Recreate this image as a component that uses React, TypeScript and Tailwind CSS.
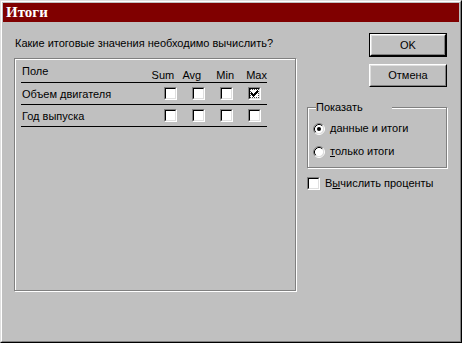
import React from "react";

const FONT = "font-['Liberation_Sans',Arial,sans-serif]";

function CheckMark() {
  const px: [number, number][] = [
    [6, 0],
    [5, 1], [6, 1],
    [0, 2], [4, 2], [5, 2], [6, 2],
    [0, 3], [1, 3], [3, 3], [4, 3], [5, 3],
    [0, 4], [1, 4], [2, 4], [3, 4], [4, 4],
    [1, 5], [2, 5], [3, 5],
    [2, 6],
  ];
  return (
    <svg width="7" height="7" viewBox="0 0 7 7" shapeRendering="crispEdges">
      {px.map(([x, y], i) => (
        <rect key={i} x={x} y={y} width="1" height="1" fill="#000" />
      ))}
    </svg>
  );
}

function Checkbox({ checked = false, focus = false }: { checked?: boolean; focus?: boolean }) {
  return (
    <div className="w-[13px] h-[13px] shrink-0 border border-t-[#808080] border-l-[#808080] border-b-white border-r-white flex">
      <div className="flex-1 border border-t-black border-l-black border-b-[#dfdfdf] border-r-[#dfdfdf] bg-white flex items-center justify-center">
        {focus ? (
          <div className="w-[9px] h-[9px] border border-dotted border-[#404040] flex items-center justify-center">
            {checked && <CheckMark />}
          </div>
        ) : (
          checked && <CheckMark />
        )}
      </div>
    </div>
  );
}

function Radio({ checked = false }: { checked?: boolean }) {
  return (
    <svg width="12" height="12" viewBox="0 0 12 12" className="shrink-0">
      <circle cx="6" cy="6" r="4.5" fill="#fff" />
      <path d="M2.11 9.89 A5.5 5.5 0 0 1 9.89 2.11" fill="none" stroke="#808080" strokeWidth="1" />
      <path d="M9.89 2.11 A5.5 5.5 0 0 1 2.11 9.89" fill="none" stroke="#fff" strokeWidth="1" />
      <path d="M2.82 9.18 A4.5 4.5 0 0 1 9.18 2.82" fill="none" stroke="#000" strokeWidth="1" />
      <path d="M9.18 2.82 A4.5 4.5 0 0 1 2.82 9.18" fill="none" stroke="#dfdfdf" strokeWidth="1" />
      {checked && <circle cx="6" cy="6" r="2" fill="#000" />}
    </svg>
  );
}

function Button({ label, isDefault = false }: { label: string; isDefault?: boolean }) {
  const inner = (
    <div className="flex-1 flex border border-t-white border-l-white border-b-black border-r-black">
      <div className="flex-1 flex items-center justify-center border border-t-[#dfdfdf] border-l-[#dfdfdf] border-b-[#808080] border-r-[#808080] text-[11px] leading-[13px] text-black">
        {label}
      </div>
    </div>
  );
  if (isDefault) {
    return <div className="w-[78px] h-[24px] flex border border-black">{inner}</div>;
  }
  return <div className="w-[78px] h-[23px] flex">{inner}</div>;
}

const rows = [
  { name: "Объем двигателя", checks: [false, false, false, true] },
  { name: "Год выпуска", checks: [false, false, false, false] },
];

export default function App() {
  return (
    <div className={`w-[462px] h-[343px] bg-[#c0c0c0] ${FONT} text-black`}>
      <div className="w-full h-full flex border border-t-[#dfdfdf] border-l-[#dfdfdf] border-b-black border-r-black">
        <div className="flex-1 flex flex-col border border-t-white border-l-white border-b-[#808080] border-r-[#808080] p-[1px]">
          {/* Title bar */}
          <div className="h-[19px] bg-[#800000] flex items-center pl-[3px]">
            <span className="text-white font-bold text-[15px] leading-[19px] font-['Liberation_Serif','Times_New_Roman',serif]">
              Итоги
            </span>
          </div>

          {/* Content */}
          <div className="flex flex-1">
            {/* Left column */}
            <div className="w-[293px] pl-[11px] flex flex-col">
              <div className="pt-[15px] pl-[1px] text-[11px] leading-[13px]">
                Какие итоговые значения необходимо вычислить?
              </div>
              <div className="mt-[8px] w-[282px] h-[233px] border border-[#808080] shadow-[inset_1px_1px_0_#fff,1px_1px_0_#fff] pl-[6px] text-[11px] leading-[13px]">
                <div className="w-[246px] h-[24px] flex items-end border-b border-black">
                  <span className="w-[131px] mb-[4px] pl-[1px]">Поле</span>
                  <span className="w-[31px]">Sum</span>
                  <span className="w-[34px]">Avg</span>
                  <span className="w-[30px]">Min</span>
                  <span>Max</span>
                </div>
                {rows.map((r) => (
                  <div key={r.name} className="w-[246px] h-[22px] flex items-center border-b border-black">
                    <span className="w-[143px] pl-[1px] pt-[2px]">{r.name}</span>
                    <div className="flex gap-[15px]">
                      {r.checks.map((c, i) => (
                        <Checkbox key={i} checked={c} focus={c} />
                      ))}
                    </div>
                  </div>
                ))}
              </div>
            </div>

            {/* Right column */}
            <div className="ml-[11px] w-[141px] flex flex-col text-[11px] leading-[13px]">
              <div className="mt-[11px] self-end mr-[1px]">
                <Button label="OK" isDefault />
              </div>
              <div className="mt-[7px] self-end mr-[1px]">
                <Button label="Отмена" />
              </div>
              <fieldset className="mt-[14px] w-[140px] border border-[#808080] shadow-[inset_1px_1px_0_#fff,1px_1px_0_#fff] pl-[5px] pb-[4px]">
                <legend className="ml-[3px] leading-[13px] bg-[#c0c0c0]">
                  <span className="inline-block w-[76px]">Показать</span>
                </legend>
                <div className="pt-[3px]">
                  <div className="h-[23px] flex items-center">
                    <Radio checked />
                    <span className="ml-[5px]">
                      <u>д</u>анные и итоги
                    </span>
                  </div>
                  <div className="h-[23px] flex items-center">
                    <Radio />
                    <span className="ml-[5px]">
                      <u>т</u>олько итоги
                    </span>
                  </div>
                </div>
              </fieldset>
              <div className="mt-[9px] h-[13px] flex items-center">
                <Checkbox />
                <span className="ml-[5px]">
                  В<u>ы</u>числить проценты
                </span>
              </div>
            </div>
          </div>
        </div>
      </div>
    </div>
  );
}
